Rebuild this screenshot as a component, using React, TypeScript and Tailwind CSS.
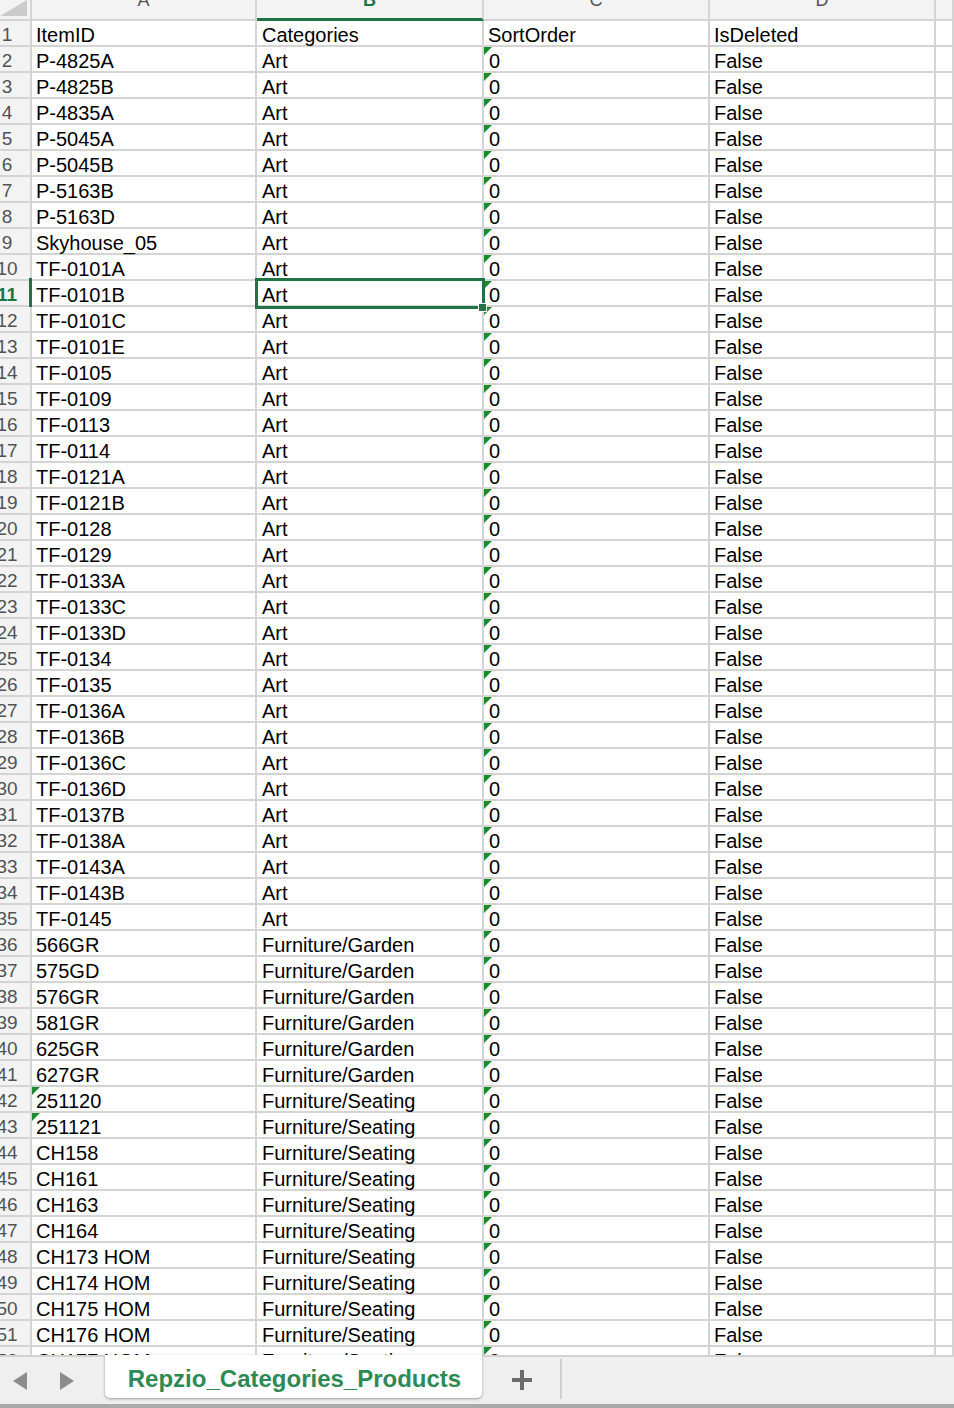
import React from "react";

type Row = { id: string; cat: string; flagA?: boolean };

const rows: Row[] = [
  ...["P-4825A", "P-4825B", "P-4835A", "P-5045A", "P-5045B", "P-5163B", "P-5163D", "Skyhouse_05",
    "TF-0101A", "TF-0101B", "TF-0101C", "TF-0101E", "TF-0105", "TF-0109", "TF-0113", "TF-0114",
    "TF-0121A", "TF-0121B", "TF-0128", "TF-0129", "TF-0133A", "TF-0133C", "TF-0133D", "TF-0134",
    "TF-0135", "TF-0136A", "TF-0136B", "TF-0136C", "TF-0136D", "TF-0137B", "TF-0138A", "TF-0143A",
    "TF-0143B", "TF-0145"].map((id) => ({ id, cat: "Art" })),
  ...["566GR", "575GD", "576GR", "581GR", "625GR", "627GR"].map((id) => ({ id, cat: "Furniture/Garden" })),
  { id: "251120", cat: "Furniture/Seating", flagA: true },
  { id: "251121", cat: "Furniture/Seating", flagA: true },
  ...["CH158", "CH161", "CH163", "CH164", "CH173 HOM", "CH174 HOM", "CH175 HOM", "CH176 HOM", "CH177 HOM"].map(
    (id) => ({ id, cat: "Furniture/Seating" })
  ),
];

const cell = "relative h-[26px] border-r-2 border-b-2 border-[#d4d4d4] whitespace-nowrap";
const text = "pl-[4px] pt-[4px] text-[20px] leading-[20px] text-black";

// little green "number stored as text" marker
const Flag = () => (
  <div className="absolute left-0 top-0 w-0 h-0 border-t-[8px] border-r-[8px] border-t-[#1d8a2c] border-r-transparent" />
);

const headCell = "h-[21px] border-r-2 border-b-2 border-[#d4d4d4] bg-[#f3f3f3] overflow-hidden text-center";

export default function App() {
  return (
    <div className="w-[954px] h-[1408px] flex flex-col overflow-hidden bg-white font-['Liberation_Sans',Arial,sans-serif]">
      <div className="h-[1355px] overflow-hidden">
        <div className="grid grid-cols-[32px_225px_227px_226px_226px_1fr]">
          {/* column headers */}
          <div className={headCell + " relative"}>
            <svg className="absolute left-0 top-0" width="28" height="17" viewBox="0 0 28 17">
              <polygon points="0,16 27,16 27,0" fill="#cbcbcb" />
            </svg>
          </div>
          <div className={headCell}>
            <div className="-mt-[9px] text-[18px] leading-[18px] text-[#555]">A</div>
          </div>
          <div className="h-[21px] border-r-2 border-b-[3px] border-r-[#d4d4d4] border-b-[#217346] bg-[#f3f3f3] overflow-hidden text-center">
            <div className="-mt-[9px] text-[18px] leading-[18px] font-bold text-[#217346]">B</div>
          </div>
          <div className={headCell}>
            <div className="-mt-[9px] text-[18px] leading-[18px] text-[#555]">C</div>
          </div>
          <div className={headCell}>
            <div className="-mt-[9px] text-[18px] leading-[18px] text-[#555]">D</div>
          </div>
          <div className={headCell} />

          {/* header row 1 */}
          <RowNum n={1} />
          <div className={cell}><div className={text}>ItemID</div></div>
          <div className={cell}><div className={text + " pl-[5px]"}>Categories</div></div>
          <div className={cell}><div className={text}>SortOrder</div></div>
          <div className={cell}><div className={text}>IsDeleted</div></div>
          <div className={cell} />

          {rows.map((r, i) => {
            const n = i + 2;
            const selected = n === 11;
            return (
              <React.Fragment key={n}>
                <RowNum n={n} active={selected} />
                <div className={cell}>
                  {r.flagA && <Flag />}
                  <div className={text}>{r.id}</div>
                </div>
                <div className={cell + (selected ? " z-10" : "")}>
                  <div className={text + " pl-[5px]"}>{r.cat}</div>
                  {selected && (
                    <>
                      <div className="absolute -left-[2px] -top-[3px] -right-[3px] -bottom-[4px] border-[3px] border-[#217346]" />
                      <div className="absolute -right-[5px] -bottom-[7px] w-[9px] h-[9px] bg-[#217346] border border-white" />
                    </>
                  )}
                </div>
                <div className={cell}>
                  <Flag />
                  <div className={text + " pl-[5px]"}>0</div>
                </div>
                <div className={cell}><div className={text}>False</div></div>
                <div className={cell} />
              </React.Fragment>
            );
          })}
        </div>
      </div>

      {/* sheet tab bar */}
      <div className="flex-1 flex items-start bg-[#efefef] border-t-2 border-[#d2d2d2] border-b-4 border-b-[#a9a9a9]">
        <div className="flex items-center h-[46px] gap-[33px] pl-[13px] pt-[2px]">
          <svg width="14" height="18" viewBox="0 0 14 18">
            <polygon points="14,0 14,18 0,9" fill="#8c8c8c" />
          </svg>
          <svg width="14" height="18" viewBox="0 0 14 18">
            <polygon points="0,0 0,18 14,9" fill="#8c8c8c" />
          </svg>
        </div>
        <div className="ml-[31px] -mt-[2px] w-[377px] h-[43px] bg-white rounded-b-[5px] shadow-[0_1px_3px_rgba(0,0,0,0.35)] flex items-center justify-center pt-[4px] pl-[2px]">
          <span className="text-[24px] leading-[24px] font-bold text-[#2d8a55]">Repzio_Categories_Products</span>
        </div>
        <div className="w-[78px] h-[46px] flex items-center justify-center pl-[2px]">
          <svg width="20" height="20" viewBox="0 0 20 20">
            <rect x="8" y="0" width="4" height="20" fill="#6b6b6b" />
            <rect x="0" y="8" width="20" height="4" fill="#6b6b6b" />
          </svg>
        </div>
        <div className="mt-[2px] w-[2px] h-[40px] bg-[#cfcfcf]" />
      </div>
    </div>
  );
}

function RowNum({ n, active }: { n: number; active?: boolean }) {
  return (
    <div className={cell + " bg-[#f3f3f3] overflow-hidden !overflow-visible"}>
      <div className="overflow-hidden h-[24px]">
        <div
          className={
            "w-[48px] -ml-[17px] text-center pt-[4px] text-[19px] leading-[20px] " +
            (active ? "font-bold text-[#217346]" : "text-[#4f5356]")
          }
        >
          {n}
        </div>
      </div>
      {active && <div className="absolute -right-[2px] -top-[3px] -bottom-[4px] w-[3px] bg-[#217346]" />}
    </div>
  );
}
